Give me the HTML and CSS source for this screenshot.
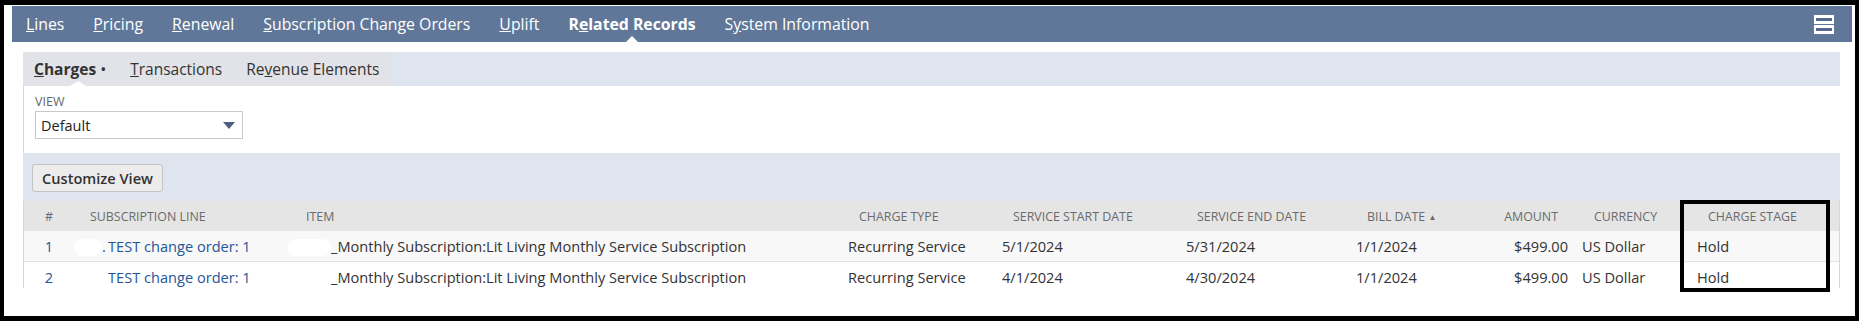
FILE: index.html
```html
<!DOCTYPE html>
<html lang="en">
<head>
    <meta charset="UTF-8">
    <title>Related Records - Charges</title>
    <link rel="stylesheet" href="styles.css">
</head>
<body>
    <div class="frame">
        <div class="tabbar">
            <nav class="tabs">
                <a class="tab"><u>L</u>ines</a>
                <a class="tab"><u>P</u>ricing</a>
                <a class="tab"><u>R</u>enewal</a>
                <a class="tab"><u>S</u>ubscription Change Orders</a>
                <a class="tab"><u>U</u>plift</a>
                <a class="tab active">R<u>e</u>lated Records</a>
                <a class="tab">S<u>y</u>stem Information</a>
            </nav>
            <span class="tab-menu">
                <svg width="20" height="19" viewBox="0 0 20 19">
                    <rect x="0" y="0" width="20" height="9" fill="#fff"/>
                    <rect x="2" y="3" width="16" height="3" fill="#55698c"/>
                    <rect x="0" y="10" width="20" height="9" fill="#fff"/>
                    <rect x="2" y="13" width="16" height="3" fill="#55698c"/>
                </svg>
            </span>
        </div>

        <div class="panel">
            <div class="subtabbar">
                <div class="subtabs">
                    <a class="subtab active"><u>C</u>harges <span class="dot">&bull;</span></a>
                    <a class="subtab"><u>T</u>ransactions</a>
                    <a class="subtab">Re<u>v</u>enue Elements</a>
                </div>
            </div>

            <div class="view-area">
                <div class="field-label">VIEW</div>
                <div class="select">
                    <span>Default</span>
                    <span class="arrow"></span>
                </div>
            </div>

            <div class="button-band">
                <button class="btn">Customize View</button>
            </div>

            <div class="list">
                <div class="row head">
                    <div class="c c-num">#</div>
                    <div class="c h-sub">Subscription Line</div>
                    <div class="c h-item">Item</div>
                    <div class="c h-std">Charge Type</div>
                    <div class="c h-std">Service Start Date</div>
                    <div class="c h-std">Service End Date</div>
                    <div class="c h-std">Bill Date <span class="sort">&#9650;</span></div>
                    <div class="c c-amount h-amount">Amount</div>
                    <div class="c h-cur">Currency</div>
                    <div class="c h-std">Charge Stage</div>
                </div>
                <div class="row odd">
                    <div class="c c-num"><a class="link">1</a></div>
                    <div class="c"><span class="blur b-sub"></span><a class="link"><span class="mark">.</span>TEST change order: 1</a></div>
                    <div class="c"><span class="blur b-item"></span>_Monthly Subscription:Lit Living Monthly Service Subscription</div>
                    <div class="c">Recurring Service</div>
                    <div class="c">5/1/2024</div>
                    <div class="c">5/31/2024</div>
                    <div class="c">1/1/2024</div>
                    <div class="c c-amount">$499.00</div>
                    <div class="c">US Dollar</div>
                    <div class="c">Hold</div>
                </div>
                <div class="row">
                    <div class="c c-num"><a class="link">2</a></div>
                    <div class="c"><span class="blur b-sub"></span><a class="link"><span class="mark">&nbsp;</span>TEST change order: 1</a></div>
                    <div class="c"><span class="blur b-item"></span>_Monthly Subscription:Lit Living Monthly Service Subscription</div>
                    <div class="c">Recurring Service</div>
                    <div class="c">4/1/2024</div>
                    <div class="c">4/30/2024</div>
                    <div class="c">1/1/2024</div>
                    <div class="c c-amount">$499.00</div>
                    <div class="c">US Dollar</div>
                    <div class="c">Hold</div>
                </div>
            </div>

            <div class="highlight"></div>
        </div>
    </div>
</body>
</html>
```

FILE: styles.css
```css
* {
    box-sizing: border-box;
}
body {
    margin: 0;
    background: #fff;
    font-family: "Open Sans", "Liberation Sans", sans-serif;
    color: #333;
}
.frame {
    width: 1859px;
    height: 321px;
    border: solid #000;
    border-width: 5px 4px 5px 4px;
    padding: 1px 3px 0 8px;
    overflow: hidden;
}

/* main tabs */
.tabbar {
    height: 36px;
    background: #607799;
    display: flex;
    align-items: center;
    padding-left: 14px;
}
.tabs {
    display: flex;
    gap: 29px;
    height: 100%;
    align-items: center;
}
.tab {
    position: relative;
    color: #fff;
    font-size: 15.8px;
    line-height: 36px;
    white-space: nowrap;
}
.tab.active {
    font-weight: bold;
}
.tab.active::after {
    content: "";
    position: absolute;
    left: 50%;
    bottom: 0;
    margin-left: -6px;
    border: 6px solid transparent;
    border-bottom-color: #fff;
    border-top: 0;
}
.tab-menu {
    margin-left: auto;
    margin-right: 18px;
    display: flex;
}

/* panel */
.panel {
    position: relative;
    margin: 10px 12px 0 11px;
}
.subtabbar {
    height: 34px;
    background: #dee5ee;
    display: flex;
}
.subtabs {
    display: flex;
    align-items: center;
    gap: 24px;
    padding: 0 13px 0 11px;
    background: #e1e3e8;
}
.subtab {
    position: relative;
    font-size: 15.5px;
    color: #333;
    line-height: 34px;
    white-space: nowrap;
}
.subtab.active {
    font-weight: bold;
}
.subtab .dot {
    font-weight: normal;
    font-size: 16px;
}
.subtab.active::after {
    content: "";
    position: absolute;
    left: 36px;
    bottom: 0;
    border: 8px solid transparent;
    border-bottom: 5px solid #fff;
    border-top: 0;
}

.view-area {
    height: 67px;
    background: #fff;
    border-left: 1px solid #d6d6d6;
    padding: 8px 0 0 11px;
}
.field-label {
    font-size: 12.5px;
    line-height: 15px;
    color: #666;
    margin-bottom: 2px;
}
.select {
    width: 208px;
    height: 28px;
    border: 1px solid #c9c9c9;
    display: flex;
    align-items: center;
    justify-content: space-between;
    padding: 0 7px 0 5px;
    font-size: 14.5px;
    color: #222;
}
.arrow {
    width: 0;
    height: 0;
    border-left: 6px solid transparent;
    border-right: 6px solid transparent;
    border-top: 7px solid #4d6080;
}

.button-band {
    height: 48px;
    background: #dee5ee;
    padding: 11px 0 0 9px;
}
.btn {
    height: 28px;
    width: 131px;
    font-family: "Open Sans", "Liberation Sans", sans-serif;
    font-size: 14.6px;
    font-weight: 600;
    color: #333;
    background: #ececec;
    border: 1px solid #c3c3c3;
    border-radius: 3px;
    padding: 0;
}

/* list */
.list {
    height: 87px;
    overflow: hidden;
    border-left: 1px solid #d6d6d6;
    border-right: 1px solid #d6d6d6;
}
.row {
    display: grid;
    grid-template-columns: 50px 213px 561px 154px 184px 170px 123px 103px 115px 1fr;
    height: 30px;
    align-items: center;
    font-size: 14.6px;
    white-space: nowrap;
}
.row.odd {
    background: #f8f8f8;
    height: 31px;
    border-bottom: 1px solid #e3e3e3;
}
.row.head {
    background: #e5e5e5;
    font-size: 12.4px;
    text-transform: uppercase;
    color: #6b6b6b;
}
.c {
    overflow: hidden;
}
.c-num {
    text-align: center;
}
.c-amount {
    text-align: right;
    padding-right: 14px;
}
.h-sub { padding-left: 16px; }
.h-item { padding-left: 19px; }
.h-std { padding-left: 11px; }
.h-cur { padding-left: 12px; }
.row.head .h-amount { padding-right: 24px; }
.sort {
    font-size: 8px;
    vertical-align: 1px;
}
.link {
    color: #255599;
}
.blur {
    display: inline-block;
    height: 17px;
    background: #fff;
    border-radius: 9px;
    vertical-align: middle;
}
.b-sub {
    width: 28px;
}
.b-item {
    width: 44px;
}
.mark {
    display: inline-block;
    width: 6px;
}

.highlight {
    position: absolute;
    left: 1657px;
    top: 148px;
    width: 150px;
    height: 92px;
    border: 4px solid #000;
}
```
